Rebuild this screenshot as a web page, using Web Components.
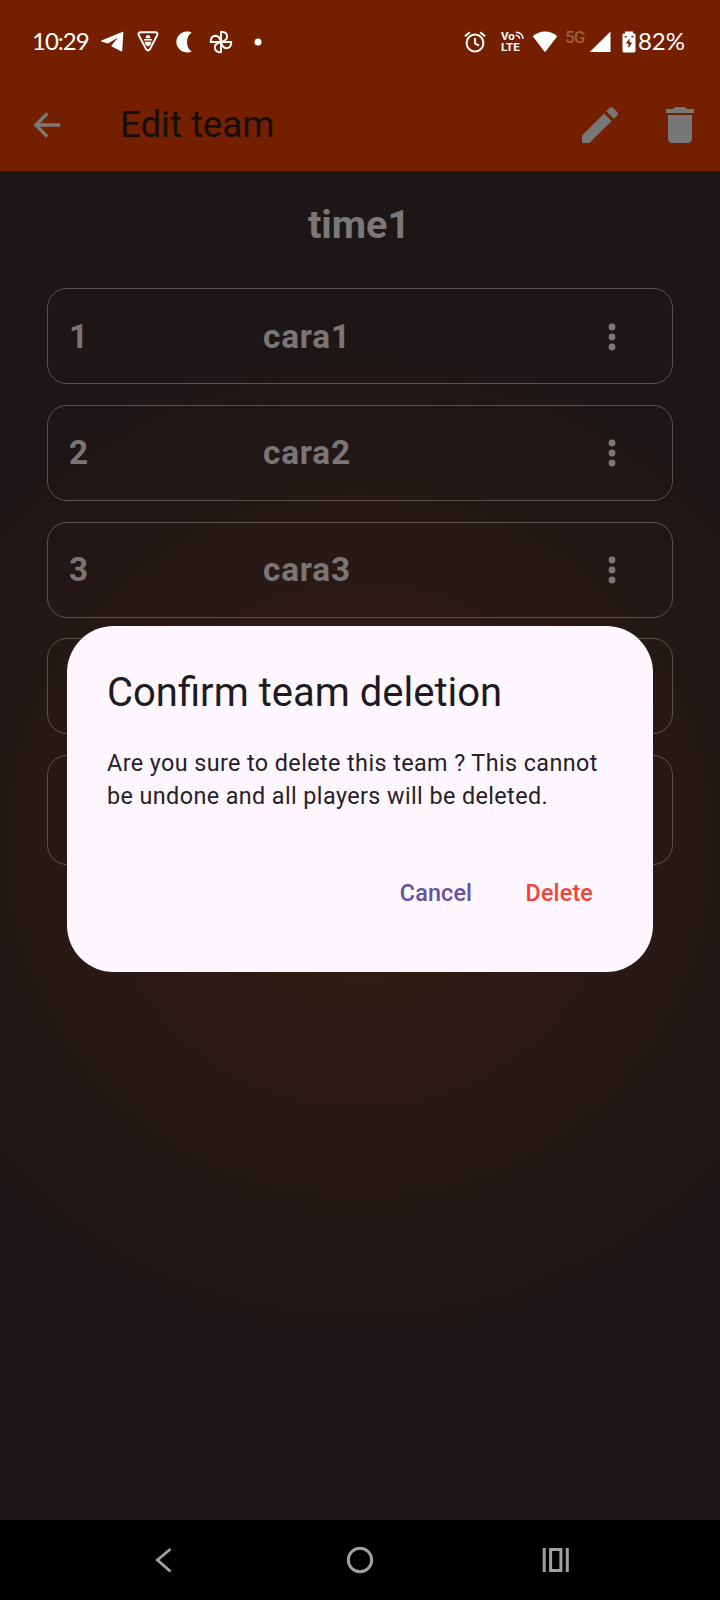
<!DOCTYPE html>
<html lang="en">
<head>
<meta charset="utf-8">
<title>Edit team</title>
<style>html,body{margin:0;padding:0;background:#000}</style>
</head>
<body>
<team-screen></team-screen>
<script>
const define = (name, html) => {
  const t = document.createElement('template');
  t.innerHTML = html;
  customElements.define(name, class extends HTMLElement {
    constructor() {
      super();
      this.attachShadow({ mode: 'open' }).append(t.content.cloneNode(true));
    }
  });
};

const blade = r => `<path d="M0 0V-10.300Q6.200-10.300 6.200-5.200 6-1.500 0 0Z" transform="rotate(${r})"/>`;
const ICONS = {
  telegram: ['0 0 24 21', '<path fill="#fff" d="M23.400.4 22.200 20.200Q22.100 20.800 21.500 20.500L11.800 15.600Q11 15 11.600 14.200L18 6.600 8.400 12.300Q7.800 12.600 7 12.300L1.400 10.500Q.6 10.100 1.400 9.600Z"/>'],
  shield: ['0 0 22 21', '<path d="M3.400 1.200h15.200q2.600.5 1.700 2.800L13 18q-2 3-4 0L1.700 4Q.8 1.700 3.400 1.200Z" fill="none" stroke="#fff" stroke-width="1.900"/><path fill="#fff" d="M8.600 6 9.600 4.200h2.800l1 1.800V7.200H8.600ZM7 8h8v1.500H7ZM7.600 10.800h6.800l-1 3-2.400 1.800-2.400-1.800Z"/>'],
  moon: ['0 0 16 22', '<path fill="#fff" d="M11 .6Q14 .4 15.700 1.600 11 4.500 11 11t4.700 9.400Q14 21.600 11 21.400C4.500 21 .4 16.500.4 11S4.500 1 11 .6Z"/>'],
  fan: ['-12 -12 24 24', `<g fill="none" stroke="#fff" stroke-width="1.900" stroke-linejoin="round">${[0, 90, 180, 270].map(blade).join('')}</g>`],
  dot: ['0 0 8 8', '<circle cx="4" cy="4" r="3.500" fill="#fff"/>'],
  alarm: ['0 0 22 22', '<g fill="none" stroke="#fff" stroke-width="2"><circle cx="11" cy="12" r="8.400"/><path d="M11 7v5.400l4 2.300M1 5.200 5.700 1.200M21 5.200 16.300 1.200"/></g>'],
  waves: ['0 0 10 9', '<g fill="none" stroke="#fff" stroke-width="1.500"><path d="M1 .9Q8.300 1 9 8.400M.8 4.200Q4.700 4.600 5.300 8.400"/></g>'],
  wifi: ['0 0 26 21', '<path fill="#fff" d="M13 .4Q20 .4 25.300 5.300L13.600 20.400q-.6.6-1.200 0L.7 5.300Q6 .4 13 .4Z"/>'],
  signal: ['0 0 22 22', '<path fill="#fff" d="M21.500.5V21H.8Z"/>'],
  battery: ['0 0 14 22', '<path fill="#fff" fill-rule="evenodd" d="M3 .4h8v2.200h1.200q1.300 0 1.300 1.300v16.200q0 1.300-1.300 1.300H1.800Q.5 21.400.5 20.100V3.900q0-1.300 1.300-1.300H3ZM7.600 7.200 3.800 12.600h2.600v4.600l3.800-5.600H7.600ZM2.600 5v1.600h2V5ZM9.400 5v1.600h2V5Z"/>'],
  back: ['0 0 24 24', '<path d="M20 12H5.500M12.200 5 5.300 12l6.900 7" fill="none" stroke="#7b7876" stroke-width="2"/>'],
  edit: ['0 0 24 24', '<path fill="#777" d="M3 17.250V21h3.750L17.810 9.940l-3.750-3.750L3 17.250zM20.710 7.040c.390-.390.390-1.020 0-1.410l-2.340-2.340c-.390-.390-1.020-.390-1.410 0l-1.830 1.830 3.750 3.750 1.830-1.830z"/>'],
  trash: ['0 0 24 24', '<path fill="#777" d="M6 19c0 1.100.9 2 2 2h8c1.100 0 2-.9 2-2V7H6v12zM19 4h-3.500l-1-1h-5l-1 1H5v2h14V4z"/>'],
  more: ['0 0 24 24', '<g fill="#7b7877"><circle cx="12" cy="6" r="2.050"/><circle cx="12" cy="12" r="2.050"/><circle cx="12" cy="18" r="2.050"/></g>'],
  navback: ['0 0 28 28', '<path d="M20.500 3 7.500 14 20.500 25.500" fill="none" stroke="#a0a0a0" stroke-width="2.900"/>'],
  navhome: ['0 0 28 28', '<circle cx="14" cy="14" r="11.700" fill="none" stroke="#a0a0a0" stroke-width="3"/>'],
  navrecent: ['0 0 28 28', '<path d="M2.200 2v24M25.300 2v24M8.600 3.500h10.300v21H8.600Z" fill="none" stroke="#a0a0a0" stroke-width="3"/>']
};
customElements.define('app-icon', class extends HTMLElement {
  connectedCallback() {
    if (this.shadowRoot) return;
    const [box, body] = ICONS[this.getAttribute('name')];
    this.attachShadow({ mode: 'open' }).innerHTML =
      `<style>:host{display:block;flex:none}svg{display:block;width:100%;height:100%}</style><svg viewBox="${box}">${body}</svg>`;
  }
});

define('status-bar', `
<style>
:host{display:flex;height:78px;padding:5px 34px 0 32px;box-sizing:border-box;align-items:center;justify-content:space-between;color:#fff;font:24px/30px Lato,sans-serif}
div{display:flex;align-items:center}
.time{width:57px;letter-spacing:-1px;white-space:nowrap;margin-top:-1px}
.volte{display:grid;grid-template-rows:11px 11px;width:24px;height:22px;margin-left:15px;font:700 11.500px/11px Roboto,sans-serif;letter-spacing:.1px}
.volte span{height:11px;line-height:11px;white-space:nowrap}
.vo{display:flex}
.g{width:20px;margin:-9px 4px 0 7px;font:500 17px/16px Roboto,sans-serif;color:#a05c40;letter-spacing:-.8px}
.pct{width:47px;font:24px/30px Lato,sans-serif;letter-spacing:-.1px;margin:-1px 0 0 2px;white-space:nowrap}
</style>
<div><span class="time">10:29</span>
<app-icon name="telegram" style="width:24px;height:21px;margin-left:11px"></app-icon>
<app-icon name="shield" style="width:22px;height:21px;margin-left:13px"></app-icon>
<app-icon name="moon" style="width:16px;height:22px;margin-left:17px"></app-icon>
<app-icon name="fan" style="width:24px;height:24px;margin-left:17px"></app-icon>
<app-icon name="dot" style="width:8px;height:8px;margin-left:21px"></app-icon></div>
<div style="margin-right:1px"><app-icon name="alarm" style="width:22px;height:22px"></app-icon>
<div class="volte"><span class="vo">Vo<app-icon name="waves" style="width:9px;height:9px"></app-icon></span><span>LTE</span></div>
<app-icon name="wifi" style="width:26px;height:21px;margin-left:7px"></app-icon>
<span class="g">5G</span>
<app-icon name="signal" style="width:22px;height:22px"></app-icon>
<app-icon name="battery" style="width:14px;height:22px;margin-left:11px"></app-icon>
<span class="pct">82%</span></div>`);

define('app-bar', `
<style>
:host{display:flex;height:93px;align-items:center;padding:0 16px 0 27px;box-sizing:border-box}
h1{margin:0 auto 0 53px;font:400 36.670px/46px Roboto,sans-serif;letter-spacing:-.05px;color:#150f0c}
</style>
<app-icon name="back" style="width:40px;height:40px"></app-icon>
<h1><slot></slot></h1>
<app-icon name="edit" style="width:48px;height:48px"></app-icon>
<app-icon name="trash" style="width:48px;height:48px;margin-left:32px"></app-icon>`);

define('player-row', `
<style>
:host{display:grid;grid-template-columns:194px 1fr 40px;align-items:center;height:96px;box-sizing:border-box;border:1.670px solid #5a514f;border-radius:20px;padding:1px 40px 0 21px;font:700 33.330px/40px Roboto,sans-serif;letter-spacing:.83px;color:#797675}
</style>
<slot name="number"></slot><slot></slot>
<app-icon name="more" style="width:40px;height:40px"></app-icon>`);

define('player-list', `
<style>:host{display:grid;gap:20.670px;padding:0 47px}</style><slot></slot>`);

define('text-button', `
<style>:host{display:flex;align-items:center;height:80px;padding:2px 20px 0;box-sizing:border-box;font:500 23.330px/33px Roboto,sans-serif;letter-spacing:.17px;color:#6353a2}</style><slot></slot>`);

define('confirm-dialog', `
<style>
:host{display:block;width:586px;height:346.670px;box-sizing:border-box;padding:40px;background:#fef7ff;border-radius:46.670px;color:#1d1b20}
h2{margin:0 0 28px;font:400 40px/53.330px Roboto,sans-serif}
p{margin:0 0 38.670px;font:400 23.330px/33.330px Roboto,sans-serif;letter-spacing:.417px;color:#252129;white-space:nowrap}
div{display:flex;justify-content:flex-end;gap:13.300px}
</style>
<h2><slot name="title"></slot></h2><p><slot></slot></p><div><slot name="actions"></slot></div>`);

define('nav-bar', `
<style>:host{display:flex;height:80px;background:#000;align-items:center;justify-content:space-between;padding:0 150px;box-sizing:border-box}</style>
<app-icon name="navback" style="width:28px;height:28px"></app-icon>
<app-icon name="navhome" style="width:28px;height:28px"></app-icon>
<app-icon name="navrecent" style="width:28px;height:28px"></app-icon>`);

define('team-screen', `
<style>
:host{display:flex;flex-direction:column;position:relative;width:720px;height:1600px;overflow:hidden;font-family:Roboto,sans-serif}
header{background:#742000;height:171px}
main{flex:1;background:radial-gradient(circle 508px at 50% 50%,#381d13,#1c1616)}
h2{margin:28px 0 0;height:89.300px;box-sizing:border-box;text-align:center;font:700 39.600px/52px Roboto,sans-serif;color:#7b7978;padding-right:2px}
.overlay{position:absolute;inset:78px 0 80px;display:flex;align-items:center;justify-content:center}
</style>
<header><status-bar></status-bar><app-bar>Edit team</app-bar></header>
<main><h2>time1</h2>
<player-list>
<player-row><span slot="number">1</span><span>cara1</span></player-row>
<player-row><span slot="number">2</span><span>cara2</span></player-row>
<player-row><span slot="number">3</span><span>cara3</span></player-row>
<player-row></player-row>
<player-row style="height:110px"></player-row>
</player-list></main>
<nav-bar></nav-bar>
<div class="overlay"><confirm-dialog><span slot="title">Confirm team deletion</span>Are you sure to delete this team ? This cannot<br>be undone and all players will be deleted.<text-button slot="actions">Cancel</text-button><text-button slot="actions" style="color:#f44336">Delete</text-button></confirm-dialog></div>`);
</script>
</body>
</html>
